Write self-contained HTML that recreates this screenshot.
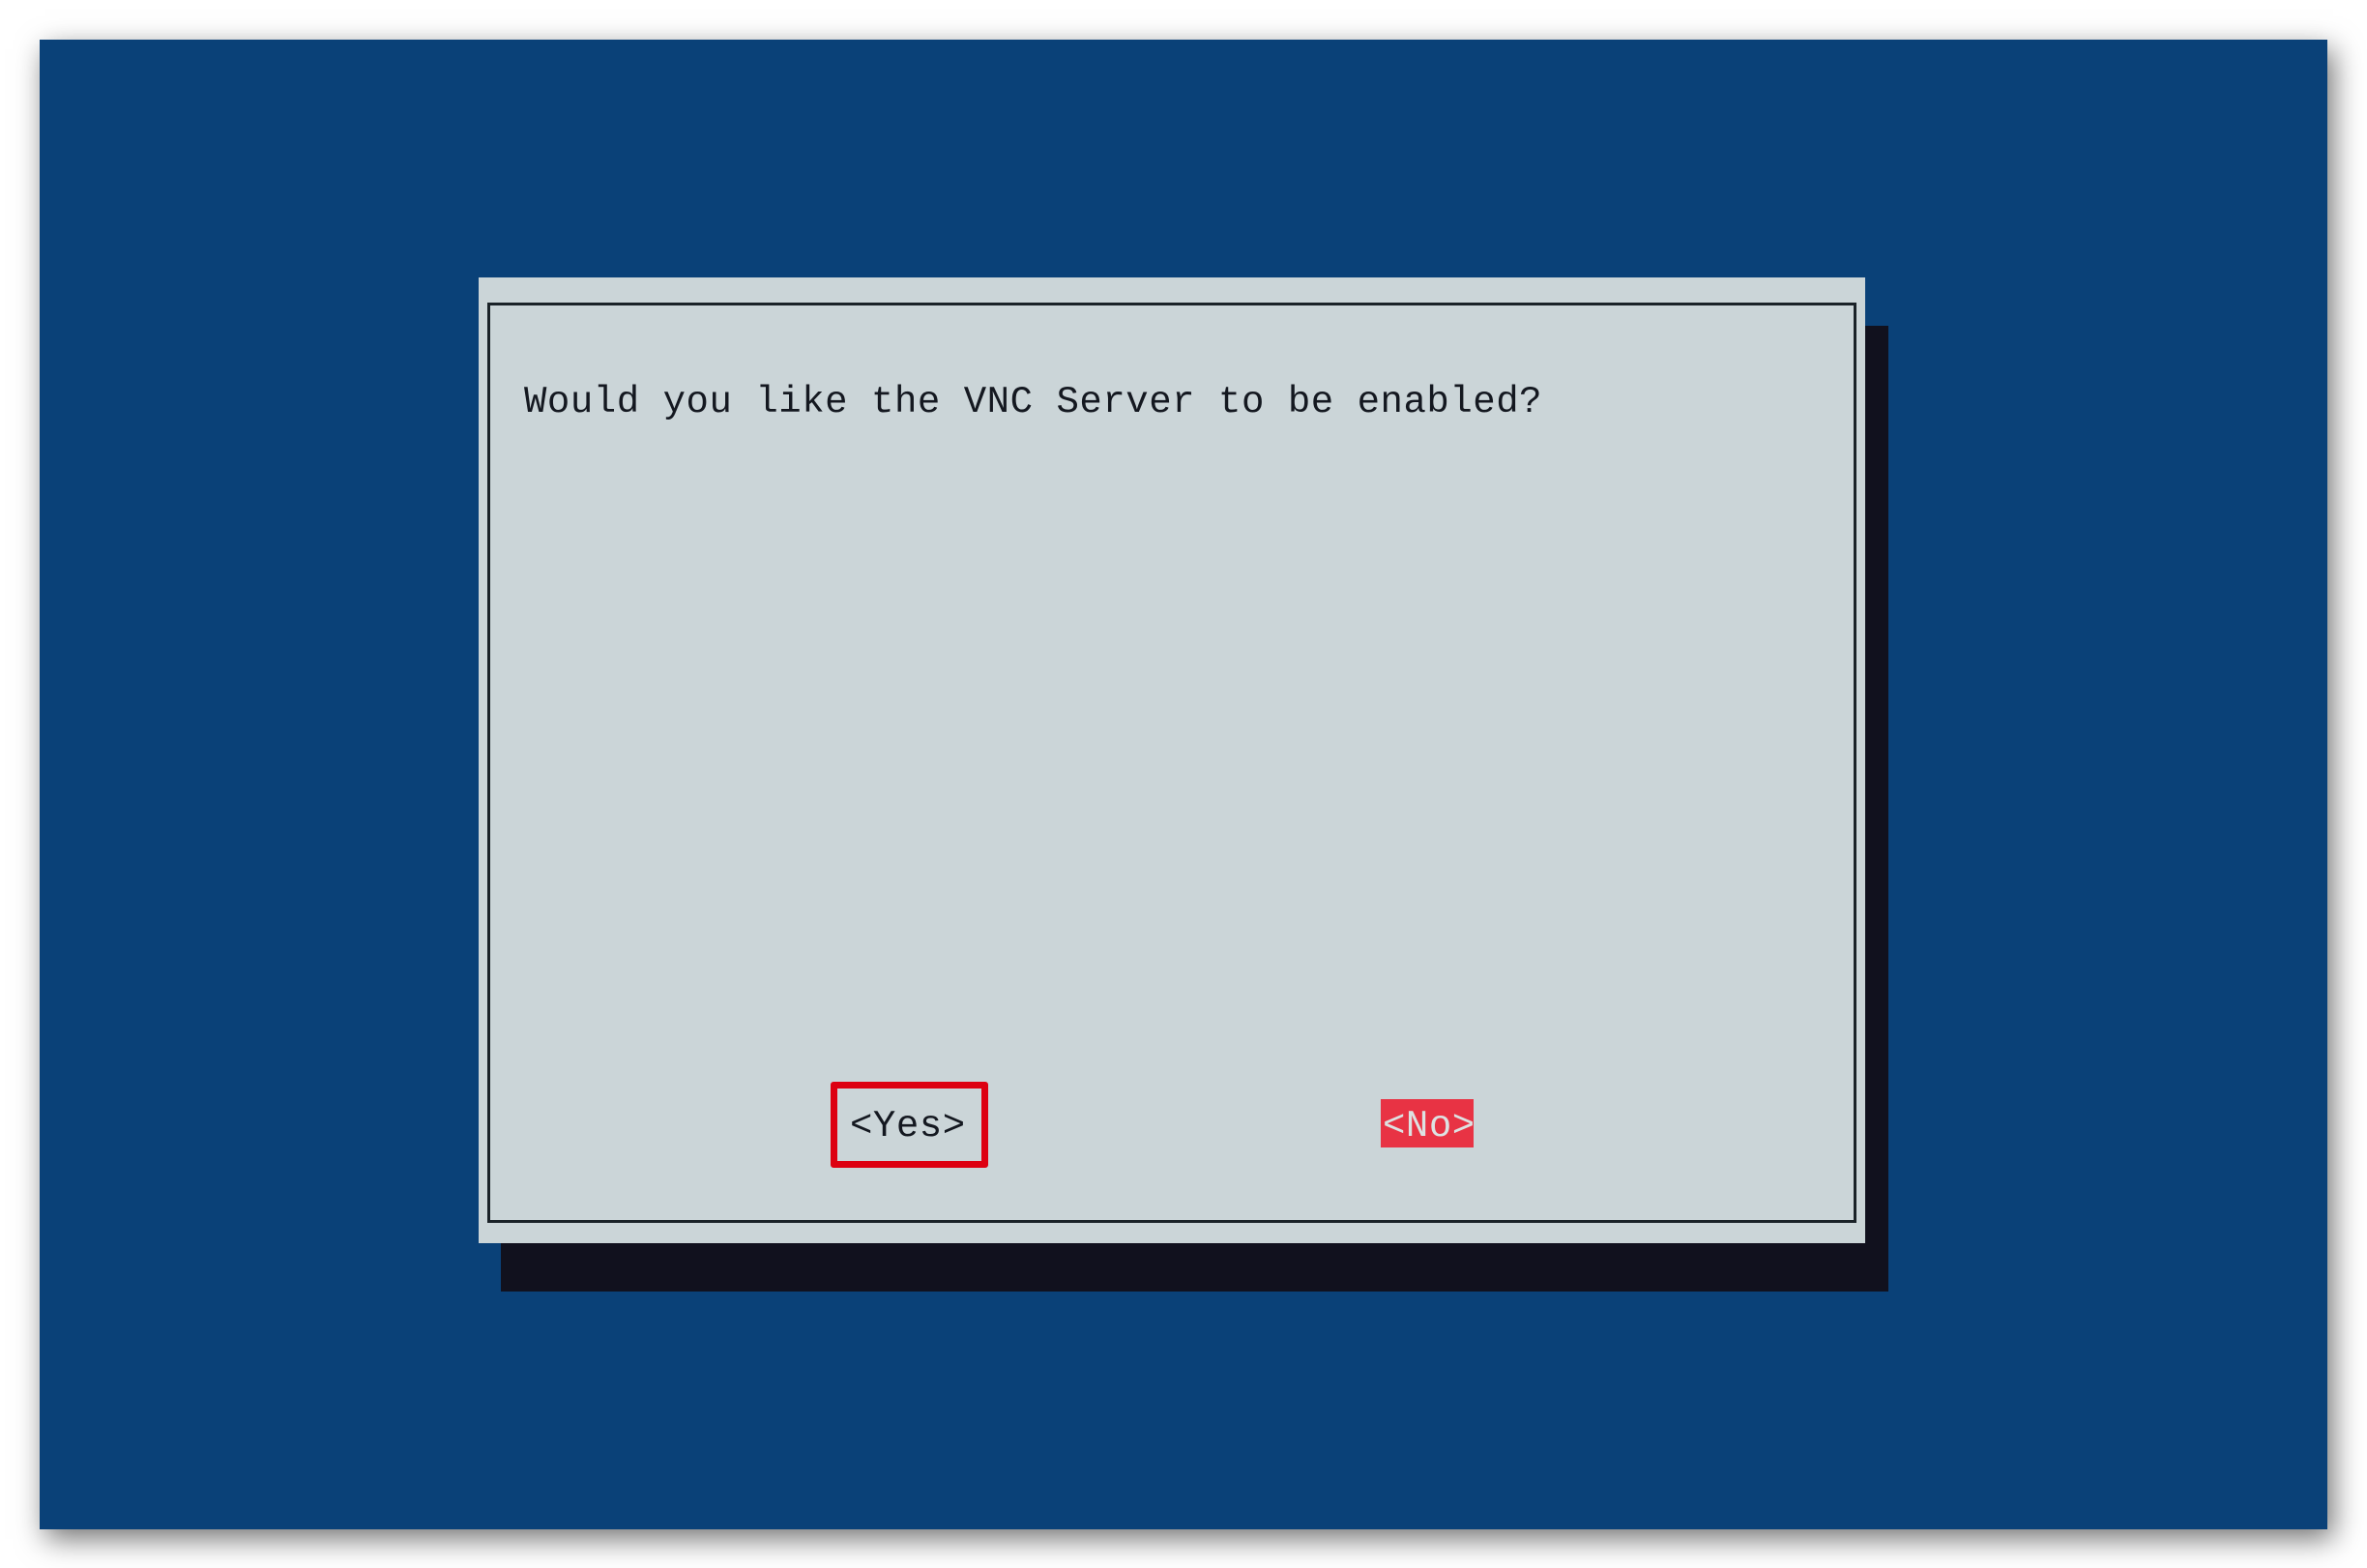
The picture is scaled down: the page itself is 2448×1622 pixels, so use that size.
<!DOCTYPE html>
<html><head><meta charset="utf-8"><style>
html,body{margin:0;padding:0;width:2448px;height:1622px;background:#fff;overflow:hidden;position:relative}
div{position:absolute;box-sizing:border-box}
.t{font-family:"Liberation Mono","DejaVu Sans Mono",monospace;font-size:39px;color:#141820;white-space:pre;line-height:1;letter-spacing:0.53px}
</style></head><body>
<div style="left:41px;top:41px;width:2366px;height:1541px;background:#0a4178;box-shadow:6px 10px 28px rgba(0,0,0,0.55)"></div>
<div style="left:518px;top:337px;width:1435px;height:999px;background:#11111e"></div>
<div style="left:495px;top:287px;width:1434px;height:999px;background:#cbd5d8"></div>
<div style="left:504px;top:313px;width:1416px;height:952px;border:3px solid #1a2228"></div>
<div class="t" style="left:542px;top:397px">Would you like the VNC Server to be enabled?</div>
<div style="left:859px;top:1119px;width:163px;height:89px;border:7px solid #dd0011;border-radius:3px"></div>
<div class="t" style="left:879px;top:1146px">&lt;Yes&gt;</div>
<div style="left:1428px;top:1137px;width:96px;height:50px;background:#e83344"></div>
<div class="t" style="left:1430px;top:1146px;color:#dde2e2">&lt;No&gt;</div>
</body></html>
